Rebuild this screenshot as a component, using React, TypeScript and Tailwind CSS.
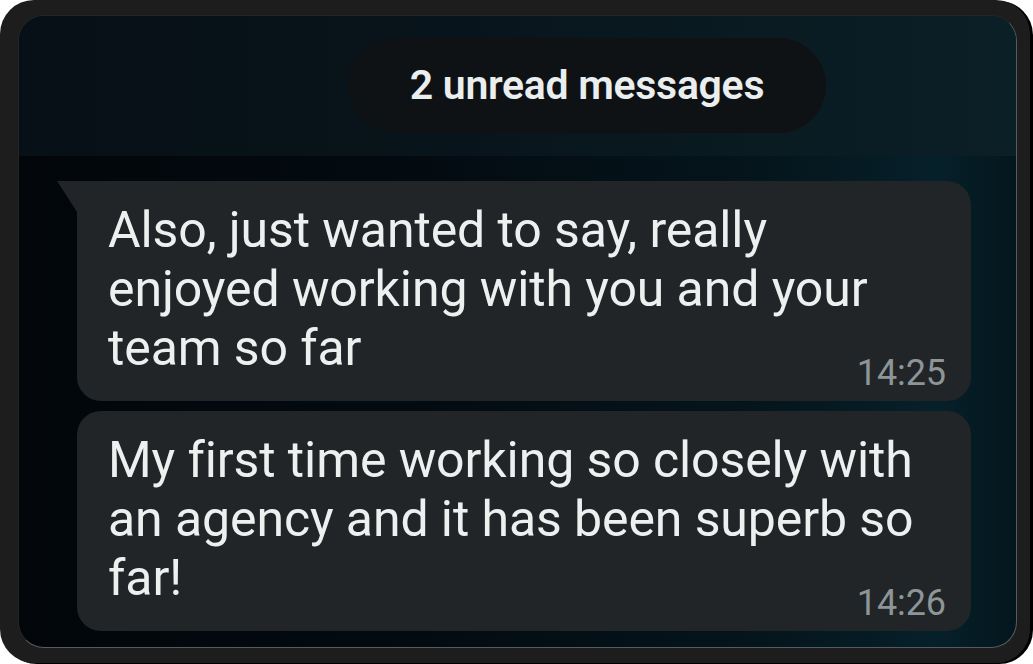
import React from "react";

function Bubble({ text, last, time, tail }: { text: string; last: string; time: string; tail?: boolean }) {
  return (
    <div className={`relative bg-[#212528] rounded-[24px] pl-[31px] pr-[27px] pt-[20px] pb-[23px] ${tail ? "rounded-tl-none" : ""}`}>
      {tail && (
        <div className="absolute left-[-20px] top-0 w-0 h-0 border-t-[31px] border-t-[#212528] border-l-[20px] border-l-transparent" />
      )}
      <p className="text-[#eef0f0] text-[50px] leading-[59px] w-[825px] tracking-[-0.1px]">
        <span>{text} </span>
        <span>{last}</span>
        <span className="float-right relative top-[34px] -mr-[13px] text-[#8d9597] text-[36px] leading-[40px]">{time}</span>
      </p>
    </div>
  );
}

export default function App() {
  return (
    <div className="w-[1033px] h-[664px] bg-white overflow-hidden" style={{ fontFamily: "Roboto, 'Noto Sans', sans-serif" }}>
      <div className="w-[1030px] h-[663px] rounded-[34px] bg-[#1d1d1d] pl-[18px] pt-[15px] pr-[13px] pb-[15px] shadow-[3px_1px_0_#000]">
        <div className="flex flex-col h-full w-full rounded-[26px] overflow-hidden border border-[#1f272b] border-r-[#555b5f] border-b-[#555b5f] bg-[linear-gradient(90deg,#02060a_0%,#030b11_40%,#05151c_75%,#06202a_92%,#04161d_100%)]">
          <div className="flex h-[140px] shrink-0 pt-[22px] pl-[329px] bg-[linear-gradient(90deg,#071016_0%,#08141b_45%,#0a1b22_75%,#0b1f26_100%)]">
            <div className="w-[478px] h-[95px] rounded-full bg-[#0f1214] flex items-center justify-center text-[#eaeeee] text-[41px] font-semibold tracking-[-0.3px]">
              2 unread messages
            </div>
          </div>
          <div className="flex flex-col gap-[10px] pl-[58px] pr-[45px] pt-[25px]">
            <Bubble
              tail
              text="Also, just wanted to say, really enjoyed working with you and your"
              last="team so far"
              time="14:25"
            />
            <Bubble
              text="My first time working so closely with an agency and it has been superb so"
              last="far!"
              time="14:26"
            />
          </div>
        </div>
      </div>
    </div>
  );
}
